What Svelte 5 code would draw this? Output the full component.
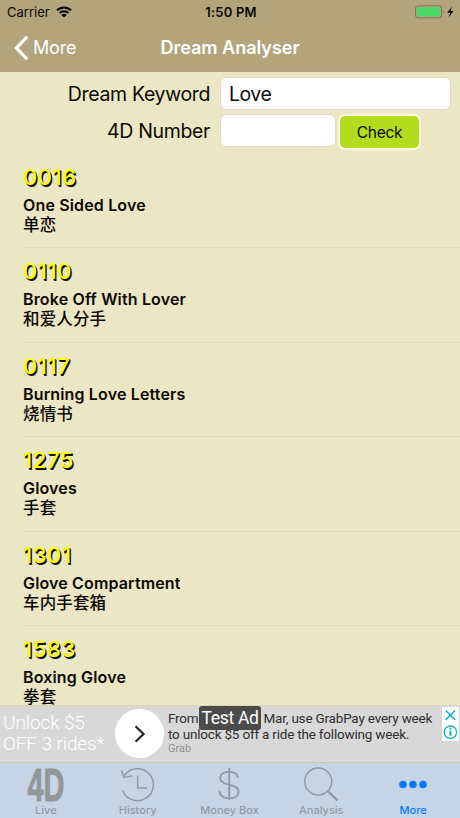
<script>
  let keyword = $state('Love')
  let number = $state('')
  let activeTab = $state('more')

  const results = [
    { number: '0016', english: 'One Sided Love', chinese: '单恋' },
    { number: '0110', english: 'Broke Off With Lover', chinese: '和爱人分手' },
    { number: '0117', english: 'Burning Love Letters', chinese: '烧情书' },
    { number: '1275', english: 'Gloves', chinese: '手套' },
    { number: '1301', english: 'Glove Compartment', chinese: '车内手套箱' },
    { number: '1583', english: 'Boxing Glove', chinese: '拳套' }
  ]

  const tabs = [
    { id: 'live', label: 'Live' },
    { id: 'history', label: 'History' },
    { id: 'money', label: 'Money Box' },
    { id: 'analysis', label: 'Analysis' },
    { id: 'more', label: 'More' }
  ]
</script>

<div class="screen">
  <header>
    <div class="status-bar">
      <div class="carrier">
        <span>Carrier</span>
        <svg width="16" height="12" viewBox="0 0 16 12">
          <path d="M1 4.4a10 10 0 0 1 14 0M3.5 7a6.4 6.4 0 0 1 9 0" fill="none" stroke="#000" stroke-width="2" />
          <path d="M5.4 9a3.7 3.7 0 0 1 5.2 0L8 11.6z" />
        </svg>
      </div>
      <span class="clock">1:50 PM</span>
      <div class="power">
        <svg width="40" height="14" viewBox="0 0 40 14">
          <rect x="0.5" y="0.8" width="26" height="12" rx="2.6" fill="none" stroke="#7d7355" />
          <rect x="2" y="2.3" width="23" height="9" rx="1.2" fill="#4cd964" />
          <path d="M28 4.8q1.6 2 0 4z" fill="#7d7355" />
          <path d="M37 1.5l-4.8 6.2h3l-1.6 4.8 4.9-6.4h-3z" />
        </svg>
      </div>
    </div>
    <nav>
      <button class="back">
        <svg width="14" height="24" viewBox="0 0 14 24">
          <path d="M12.3 1.7L2.4 12l9.9 10.3" fill="none" stroke="#fff" stroke-width="3.2" stroke-linecap="round" />
        </svg>
        <span>More</span>
      </button>
      <h1>Dream Analyser</h1>
    </nav>
  </header>

  <form onsubmit={(event) => event.preventDefault()}>
    <label for="keyword">Dream Keyword</label>
    <input id="keyword" class="keyword" bind:value={keyword} />
    <label for="number">4D Number</label>
    <div class="number-row">
      <input id="number" bind:value={number} />
      <button class="check">Check</button>
    </div>
  </form>

  <ul class="results">
    {#each results as item (item.number)}
      <li>
        <strong>{item.number}</strong>
        <span class="english">{item.english}</span>
        <span class="chinese">{item.chinese}</span>
      </li>
    {/each}
  </ul>

  <aside class="ad">
    <p class="offer">Unlock $5<br />OFF 3 rides*</p>
    <div class="go">
      <svg width="12" height="18" viewBox="0 0 12 18">
        <path d="M1.5 1.2L9.6 9l-8.1 7.8" fill="none" stroke="#222" stroke-width="2.2" />
      </svg>
    </div>
    <div class="copy">
      <p class="first"><span>From</span><span>Mar, use GrabPay every week</span></p>
      <p>to unlock $5 off a ride the following week.</p>
      <p class="brand">Grab</p>
    </div>
    <span class="test-ad">Test Ad</span>
    <div class="ad-choices">
      <svg width="17" height="34" viewBox="0 0 17 34" fill="none" stroke="#12b0c8" stroke-width="1.5">
        <path d="M3.7 3.5l9.4 9.4M13.1 3.5l-9.4 9.4" />
        <circle cx="8.4" cy="25.2" r="6.2" stroke-width="1.3" />
        <path d="M8.4 23.8v5M8.4 20.9v1.8" stroke-width="2" />
      </svg>
    </div>
  </aside>

  <footer>
    {#each tabs as tab (tab.id)}
      <button class="tab" class:active={activeTab === tab.id} onclick={() => (activeTab = tab.id)}>
        <svg width="44" height="38" viewBox="0 0 44 38" fill="none" stroke="currentColor" stroke-width="1.5">
          {#if tab.id === 'live'}
            <text class="logo" x="3.5" y="35" textLength="37" lengthAdjust="spacingAndGlyphs">4D</text>
          {:else if tab.id === 'history'}
            <path d="M8.3 9.5A16 16 0 1 1 6.5 24.5M5.4 4.6L8 11.3l8.2-1.2M21.6 9.5v12.6h9.2" />
          {:else if tab.id === 'money'}
            <path
              d="M31 11.5C30 7.4 26.7 5.7 22 5.7c-5 0-8.7 2.2-8.7 6.2 0 4.2 3.9 5.6 8.7 6.7 5.4 1.3 9.5 2.7 9.5 7.1 0 4.3-4 6.6-9.4 6.6-5.5 0-9.1-2.3-9.8-7.4M22.2 2v32"
              stroke-width="1.9"
            />
          {:else if tab.id === 'analysis'}
            <circle cx="19.2" cy="15.5" r="13.5" />
            <path d="M28.8 25.2l9.7 9.2" stroke-width="2.4" />
          {:else}
            <g fill="currentColor" stroke="none">
              <circle cx="12" cy="18.5" r="3.8" />
              <circle cx="22" cy="18.5" r="3.8" />
              <circle cx="32" cy="18.5" r="3.8" />
            </g>
          {/if}
        </svg>
        <span>{tab.label}</span>
      </button>
    {/each}
  </footer>
</div>

<style>
  :global(body) {
    margin: 0;
    overflow: hidden;
  }

  .screen {
    display: flex;
    flex-direction: column;
    width: 460px;
    height: 818px;
    overflow: hidden;
    background: #ebe6c4;
    color: #0b0a06;
    font-family: Inter, 'Noto Sans CJK SC', sans-serif;
  }

  button {
    border: 0;
    padding: 0;
    background: none;
    font: inherit;
    color: inherit;
  }

  p {
    margin: 0;
  }

  header {
    flex: none;
    height: 71px;
    background: #b3a47c;
    border-bottom: 1px solid #b5a67f;
  }

  .status-bar {
    display: grid;
    grid-template-columns: 1fr auto 1fr;
    align-items: center;
    height: 24px;
    padding: 0 5px 0 7px;
    font-size: 13px;
  }

  .carrier {
    display: flex;
    align-items: center;
    gap: 6px;
  }

  .clock {
    font-weight: 600;
    letter-spacing: 0.2px;
  }

  .power {
    display: flex;
    justify-content: flex-end;
  }

  nav {
    display: grid;
    grid-template-columns: 1fr auto 1fr;
    align-items: center;
    height: 47px;
    color: #fff;
  }

  .back {
    display: flex;
    align-items: center;
    gap: 5px;
    padding-left: 14px;
    font-size: 18px;
    letter-spacing: -0.2px;
  }

  h1 {
    margin: 0;
    font-size: 18px;
    font-weight: 600;
  }

  form {
    flex: none;
    display: grid;
    grid-template-columns: 210px 230px;
    grid-template-rows: 33px 36px;
    column-gap: 10px;
    row-gap: 4px;
    height: 82px;
    padding-top: 5px;
    box-sizing: border-box;
  }

  label {
    text-align: right;
    font-size: 19.5px;
    letter-spacing: -0.35px;
    line-height: 35px;
  }

  input {
    box-sizing: border-box;
    width: 116px;
    height: 33px;
    border: 1px solid #e0dcc4;
    border-radius: 6px;
    padding: 0 8px;
    background: #fff;
    font: inherit;
    font-size: 19.5px;
    letter-spacing: -0.5px;
    color: inherit;
    outline: none;
  }

  input.keyword {
    width: 231px;
  }

  .number-row {
    display: flex;
    gap: 2px;
  }

  .check {
    box-sizing: border-box;
    width: 83px;
    height: 36px;
    border: 2px solid #f8fbdc;
    border-radius: 7px;
    background: #b5dc1c;
    font-size: 15.5px;
    letter-spacing: -0.3px;
  }

  .results {
    flex: 1;
    min-height: 0;
    margin: 0;
    padding: 0 0 0 23px;
    overflow: hidden;
    list-style: none;
  }

  li {
    display: flex;
    flex-direction: column;
    box-sizing: border-box;
    height: 94.4px;
    padding-top: 8px;
    border-bottom: 1px solid #e0dbc0;
  }

  strong {
    height: 34px;
    font-size: 22px;
    font-weight: 500;
    letter-spacing: 0.6px;
    line-height: 30px;
    color: #ff0;
    text-shadow: 1px 1px 0 #111, 1.5px 1.5px 0 #111;
  }

  .english,
  .chinese {
    font-size: 16px;
    font-weight: 600;
    line-height: 19px;
    letter-spacing: 0.15px;
    white-space: nowrap;
  }

  .chinese {
    font-family: 'Noto Sans CJK SC', sans-serif;
    font-size: 16.5px;
    font-weight: 500;
    line-height: 18px;
  }

  .ad {
    position: relative;
    flex: none;
    display: flex;
    height: 56px;
    border-top: 1px solid #d8d4c4;
    border-bottom: 1px solid #cfc7a6;
    background: #d8d8d8;
    font-family: Roboto, sans-serif;
  }

  .offer {
    width: 112px;
    padding: 6px 0 0 3px;
    font-size: 19px;
    font-weight: 300;
    letter-spacing: -0.1px;
    line-height: 21px;
    color: #fff;
    white-space: nowrap;
  }

  .go {
    display: flex;
    align-items: center;
    justify-content: center;
    flex: none;
    width: 49px;
    height: 49px;
    margin-top: 3px;
    border-radius: 50%;
    background: #fff;
  }

  .copy {
    padding: 5px 0 0 4px;
    font-size: 13.5px;
    letter-spacing: -0.2px;
    line-height: 15.5px;
    color: #303030;
    white-space: nowrap;
  }

  .first {
    display: flex;
    gap: 65px;
  }

  .brand {
    font-size: 11px;
    letter-spacing: 0;
    line-height: 13px;
    color: #909090;
  }

  .test-ad {
    position: absolute;
    left: 199px;
    top: 0;
    width: 62px;
    height: 24px;
    border-radius: 3px;
    background: #4b4b4b;
    font-size: 17.5px;
    letter-spacing: -0.3px;
    line-height: 25px;
    text-align: center;
    color: #fff;
  }

  .ad-choices {
    position: absolute;
    right: 1px;
    top: 1px;
    width: 17px;
    height: 34px;
    background: #fff;
  }

  footer {
    flex: none;
    display: flex;
    height: 55px;
    background: #c6d5e5;
  }

  .tab {
    display: flex;
    flex-direction: column;
    align-items: center;
    width: 91.8px;
    padding-top: 3px;
    font-size: 11px;
    font-weight: 500;
    line-height: 13px;
    color: #929ba5;
  }

  .tab.active {
    color: #087aff;
  }

  .logo {
    fill: #929799;
    stroke: #929799;
    stroke-width: 1;
    font-family: 'Liberation Sans', sans-serif;
    font-size: 46px;
    font-weight: 700;
  }
</style>
